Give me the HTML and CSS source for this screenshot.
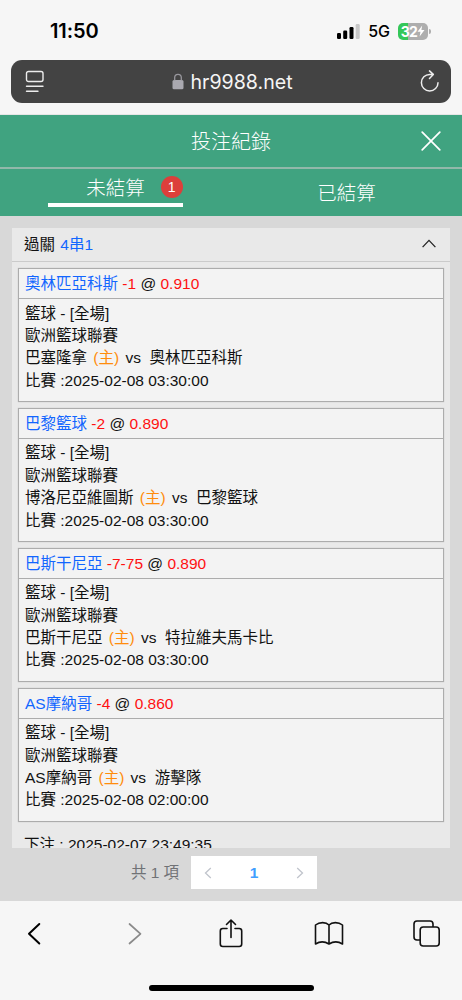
FILE: index.html
```html
<!DOCTYPE html>
<html lang="zh-TW">
<head>
  <meta charset="UTF-8">
  <meta name="viewport" content="width=device-width, initial-scale=1.0">
  <title>投注紀錄</title>
  <link rel="stylesheet" href="styles.css">
</head>
<body>
  <div class="browser-top">
    <div class="status-bar">
      <span class="time">11:50</span>
      <div class="status-right">
        <svg class="signal" width="23" height="15" viewBox="0 0 23 15">
          <rect x="0" y="9" width="4" height="6" rx="1.2"/>
          <rect x="6.2" y="6.5" width="4" height="8.5" rx="1.2"/>
          <rect x="12.5" y="3" width="4" height="12" rx="1.2"/>
          <rect x="18.7" y="0" width="4" height="15" rx="1.2" fill="#c8c8c8"/>
        </svg>
        <span class="network">5G</span>
        <div class="battery">
          <span>32</span>
          <svg width="8" height="12" viewBox="0 0 8 12"><path d="M5.2 .5 .5 6.8h3L2.6 11.5 7.5 5H4.4z" fill="#fff"/></svg>
        </div>
        <i class="battery-tip"></i>
      </div>
    </div>
    <div class="address-bar">
      <svg width="20" height="23" viewBox="0 0 20 23" fill="none" stroke="#ededed" stroke-width="1.4" stroke-linecap="round">
        <rect x="1.5" y="1.5" width="16.5" height="10" rx="2"/>
        <path d="M1.5 16.2h16.5M1.5 21.2h11.5"/>
      </svg>
      <div class="url">
        <svg width="12" height="17" viewBox="0 0 12 17">
          <rect x=".5" y="7" width="11" height="9.3" rx="1.5" fill="#aaa9b0"/>
          <path d="M2.7 7.5V4.6a3.3 3.3 0 0 1 6.6 0v2.9" fill="none" stroke="#98979d" stroke-width="1.3"/>
        </svg>
        <span>hr9988.net</span>
      </div>
      <svg width="20" height="24" viewBox="0 0 20 24" fill="none" stroke="#ededed" stroke-width="1.5" stroke-linecap="round" stroke-linejoin="round">
        <path d="M18 12.700a8.300 8.300 0 1 1-8.300-8.300h3.500M9.500 .9l3.800 3.500-3.800 4"/>
      </svg>
    </div>
  </div>

  <header class="page-header">
    <h1>投注紀錄</h1>
    <svg class="close" width="20" height="20" viewBox="0 0 20 20" stroke="#fff" stroke-width="1.7" stroke-linecap="round"><path d="M1.2 1.2l17.6 17.6M18.8 1.2 1.2 18.8"/></svg>
  </header>
  <nav class="tabs">
    <div class="tab active"><span class="tab-label">未結算</span><span class="badge">1</span></div>
    <div class="tab">已結算</div>
  </nav>

  <main class="content">
    <section class="panel">
      <div class="panel-head">
        <span>過關 <span class="blue parlay">4串1</span></span>
        <svg width="14" height="9" viewBox="0 0 14 9" fill="none" stroke="#222" stroke-width="1.3"><path d="M.6 8.1 7 1.4l6.4 6.7"/></svg>
      </div>
      <div class="bets">
        <div class="bet">
          <div class="bet-head"><span class="blue">奧林匹亞科斯</span> <span class="red">-1</span> @ <span class="red">0.910</span></div>
          <div class="bet-body">
            <p>籃球 - [全場]</p>
            <p>歐洲籃球聯賽</p>
            <p>巴塞隆拿 <span class="home">(主)</span> vs &nbsp;奧林匹亞科斯</p>
            <p>比賽 :2025-02-08 03:30:00</p>
          </div>
        </div>
        <div class="bet">
          <div class="bet-head"><span class="blue">巴黎籃球</span> <span class="red">-2</span> @ <span class="red">0.890</span></div>
          <div class="bet-body">
            <p>籃球 - [全場]</p>
            <p>歐洲籃球聯賽</p>
            <p>博洛尼亞維圖斯 <span class="home">(主)</span> vs &nbsp;巴黎籃球</p>
            <p>比賽 :2025-02-08 03:30:00</p>
          </div>
        </div>
        <div class="bet">
          <div class="bet-head"><span class="blue">巴斯干尼亞</span> <span class="red">-7-75</span> @ <span class="red">0.890</span></div>
          <div class="bet-body">
            <p>籃球 - [全場]</p>
            <p>歐洲籃球聯賽</p>
            <p>巴斯干尼亞 <span class="home">(主)</span> vs &nbsp;特拉維夫馬卡比</p>
            <p>比賽 :2025-02-08 03:30:00</p>
          </div>
        </div>
        <div class="bet">
          <div class="bet-head"><span class="blue">AS摩納哥</span> <span class="red">-4</span> @ <span class="red">0.860</span></div>
          <div class="bet-body">
            <p>籃球 - [全場]</p>
            <p>歐洲籃球聯賽</p>
            <p>AS摩納哥 <span class="home">(主)</span> vs &nbsp;游擊隊</p>
            <p>比賽 :2025-02-08 02:00:00</p>
          </div>
        </div>
      </div>
      <div class="placed">下注 : 2025-02-07 23:49:35</div>
    </section>

    <div class="pagination">
      <span class="total">共 1 項</span>
      <div class="pager">
        <svg width="8" height="12" viewBox="0 0 8 12" fill="none" stroke="#c0c4cc" stroke-width="1.3"><path d="M6.8 1 1.5 6l5.3 5"/></svg>
        <b>1</b>
        <svg width="8" height="12" viewBox="0 0 8 12" fill="none" stroke="#c0c4cc" stroke-width="1.3"><path d="M1.2 1l5.3 5-5.3 5"/></svg>
      </div>
    </div>
  </main>

  <footer class="toolbar">
    <div class="tools">
      <svg width="28" height="32" viewBox="0 0 28 32" fill="none" stroke="#000" stroke-width="2" stroke-linecap="round" stroke-linejoin="round"><path d="M18.300 7 8 16.800l10.300 9.700"/></svg>
      <svg width="28" height="32" viewBox="0 0 28 32" fill="none" stroke="#8a8a8a" stroke-width="1.7" stroke-linecap="round" stroke-linejoin="round"><path d="M10.500 7l11 9.800-11 9.700"/></svg>
      <svg width="28" height="32" viewBox="0 0 28 32" fill="none" stroke="#111" stroke-width="1.6" stroke-linecap="round" stroke-linejoin="round"><path d="M11 11.500H6.800a2.500 2.500 0 0 0-2.500 2.500v13a2.500 2.500 0 0 0 2.500 2.500h16.400a2.500 2.500 0 0 0 2.500-2.500V14a2.500 2.500 0 0 0-2.500-2.500H19M15 20.500V3M10.500 7.500 15 3l4.500 4.500"/></svg>
      <svg width="30" height="32" viewBox="0 0 30 32" fill="none" stroke="#111" stroke-width="1.6" stroke-linejoin="round"><path d="M15 8C12 4.800 5.500 4.800 1.500 8v19c4-2.500 9.500-2.500 13.500 0 4-2.500 9.500-2.500 13.500 0V8C24.500 4.800 18 4.800 15 8zM15 8v19"/></svg>
      <svg width="28" height="32" viewBox="0 0 28 32" fill="none" stroke="#111" stroke-width="1.6" stroke-linejoin="round"><path d="M7 23H4A3 3 0 0 1 1 20V7a3 3 0 0 1 3-3h13a3 3 0 0 1 3 3v3"/><rect x="7.200" y="10" width="19" height="19" rx="3"/></svg>
    </div>
    <div class="home-indicator"></div>
  </footer>
</body>
</html>
```

FILE: styles.css
```css
* {
  box-sizing: border-box;
}
body {
  margin: 0;
  width: 462px;
  height: 1000px;
  overflow: hidden;
  display: flex;
  flex-direction: column;
  background-color: #f6f6f6;
  color: #111;
  font-family: "Liberation Sans", "Noto Sans CJK TC", sans-serif;
  font-size: 15.5px;
}
svg {
  display: block;
  flex: none;
}
.browser-top {
  height: 115px;
  flex: none;
  padding: 0 11px;
  border-bottom: 1px solid #e6e6e6;
}
.status-bar {
  height: 60px;
  padding: 2px 20px 0 39px;
  display: flex;
  align-items: center;
  justify-content: space-between;
  font-family: Inter, sans-serif;
  color: #000;
}
.time {
  font-size: 20px;
  font-weight: 600;
  letter-spacing: -0.1px;
}
.status-right {
  display: flex;
  align-items: center;
}
.network {
  font-size: 16px;
  font-weight: 500;
  margin: 0 8px;
}
.battery {
  width: 30px;
  height: 17px;
  border-radius: 5px;
  display: flex;
  align-items: center;
  justify-content: center;
  background: linear-gradient(to right, #34c759 10px, #aeaeae 10px);
  color: #fff;
  font-size: 14px;
  font-weight: 700;
  letter-spacing: -0.7px;
}
.battery-tip {
  width: 2px;
  height: 5px;
  margin-left: 1px;
  border-radius: 0 2px 2px 0;
  background-color: #aeaeae;
}
.address-bar {
  height: 43px;
  padding: 0 11px 0 14px;
  border-radius: 11px;
  display: flex;
  align-items: center;
  justify-content: space-between;
  background-color: #434343;
}
.url {
  display: flex;
  align-items: center;
  gap: 6px;
  color: #f5f5f5;
  font-family: Inter, sans-serif;
  font-size: 19.6px;
}
.page-header {
  height: 54px;
  flex: none;
  display: grid;
  grid-template-columns: 1fr auto 1fr;
  align-items: center;
  padding: 0 21px;
  background-color: #40a380;
  border-bottom: 2px solid #91b8aa;
  color: #fff;
}
.page-header h1 {
  grid-column: 2;
  margin: 0;
  padding-bottom: 2px;
  font-size: 20px;
  font-weight: 300;
}
.close {
  justify-self: end;
}
.tabs {
  height: 47px;
  flex: none;
  display: grid;
  grid-template-columns: 1fr 1fr;
  background-color: #40a380;
  color: #fff;
  font-size: 19.5px;
  font-weight: 300;
}
.tab {
  display: flex;
  align-items: center;
  justify-content: center;
  padding-bottom: 3px;
}
.tab.active {
  width: 135px;
  height: 38px;
  margin-left: 48px;
  padding: 1px 0 0 38px;
  gap: 16px;
  border-bottom: 4px solid #fff;
}
.badge {
  width: 22px;
  height: 22px;
  flex: none;
  border-radius: 50%;
  background-color: #dc3f3b;
  font-size: 14px;
  line-height: 22px;
  text-align: center;
}
.content {
  height: 685px;
  flex: none;
  padding: 12px 12px 0;
  background-color: #d8d8d8;
}
.panel {
  height: 620px;
  overflow: hidden;
  background-color: #e9e9e9;
}
.panel-head {
  height: 34px;
  padding: 0 14px 3px 12px;
  display: flex;
  align-items: center;
  justify-content: space-between;
  border-bottom: 1px solid #cbcbcb;
}
.parlay {
  margin-left: 1px;
}
.bets {
  display: flex;
  flex-direction: column;
  gap: 6px;
  padding: 6px 6px 0;
}
.bet {
  height: 133.9px;
  border: 1px solid #acacac;
  box-shadow: 0 0 1px #bbb;
  background-color: #f3f3f3;
}
.bet-head {
  height: 30px;
  padding-left: 6px;
  line-height: 29px;
  border-bottom: 1px solid #acacac;
}
.bet-body {
  padding: 3.5px 6px;
}
.bet-body p {
  margin: 0;
  height: 22.4px;
  line-height: 22.4px;
  white-space: nowrap;
}
.blue {
  color: #1266ff;
}
.red {
  color: #ff1111;
}
.home {
  margin: 0 2px;
  color: #ff8c0c;
}
.placed {
  padding: 12px 12px 0;
  line-height: 22px;
}
.pagination {
  display: flex;
  align-items: center;
  justify-content: center;
  gap: 12px;
  padding: 8px 14px 0 0;
}
.total {
  padding-bottom: 3px;
  color: #707276;
}
.pager {
  width: 126px;
  height: 33px;
  padding: 0 13px;
  display: flex;
  align-items: center;
  justify-content: space-between;
  background-color: #fff;
}
.pager b {
  color: #409eff;
}
.toolbar {
  flex: 1;
  display: flex;
  flex-direction: column;
  align-items: center;
  justify-content: space-between;
  padding: 16px 21px 9px;
}
.tools {
  width: 100%;
  display: flex;
  justify-content: space-between;
}
.home-indicator {
  width: 165px;
  height: 6px;
  border-radius: 3px;
  background-color: #000;
}
```
